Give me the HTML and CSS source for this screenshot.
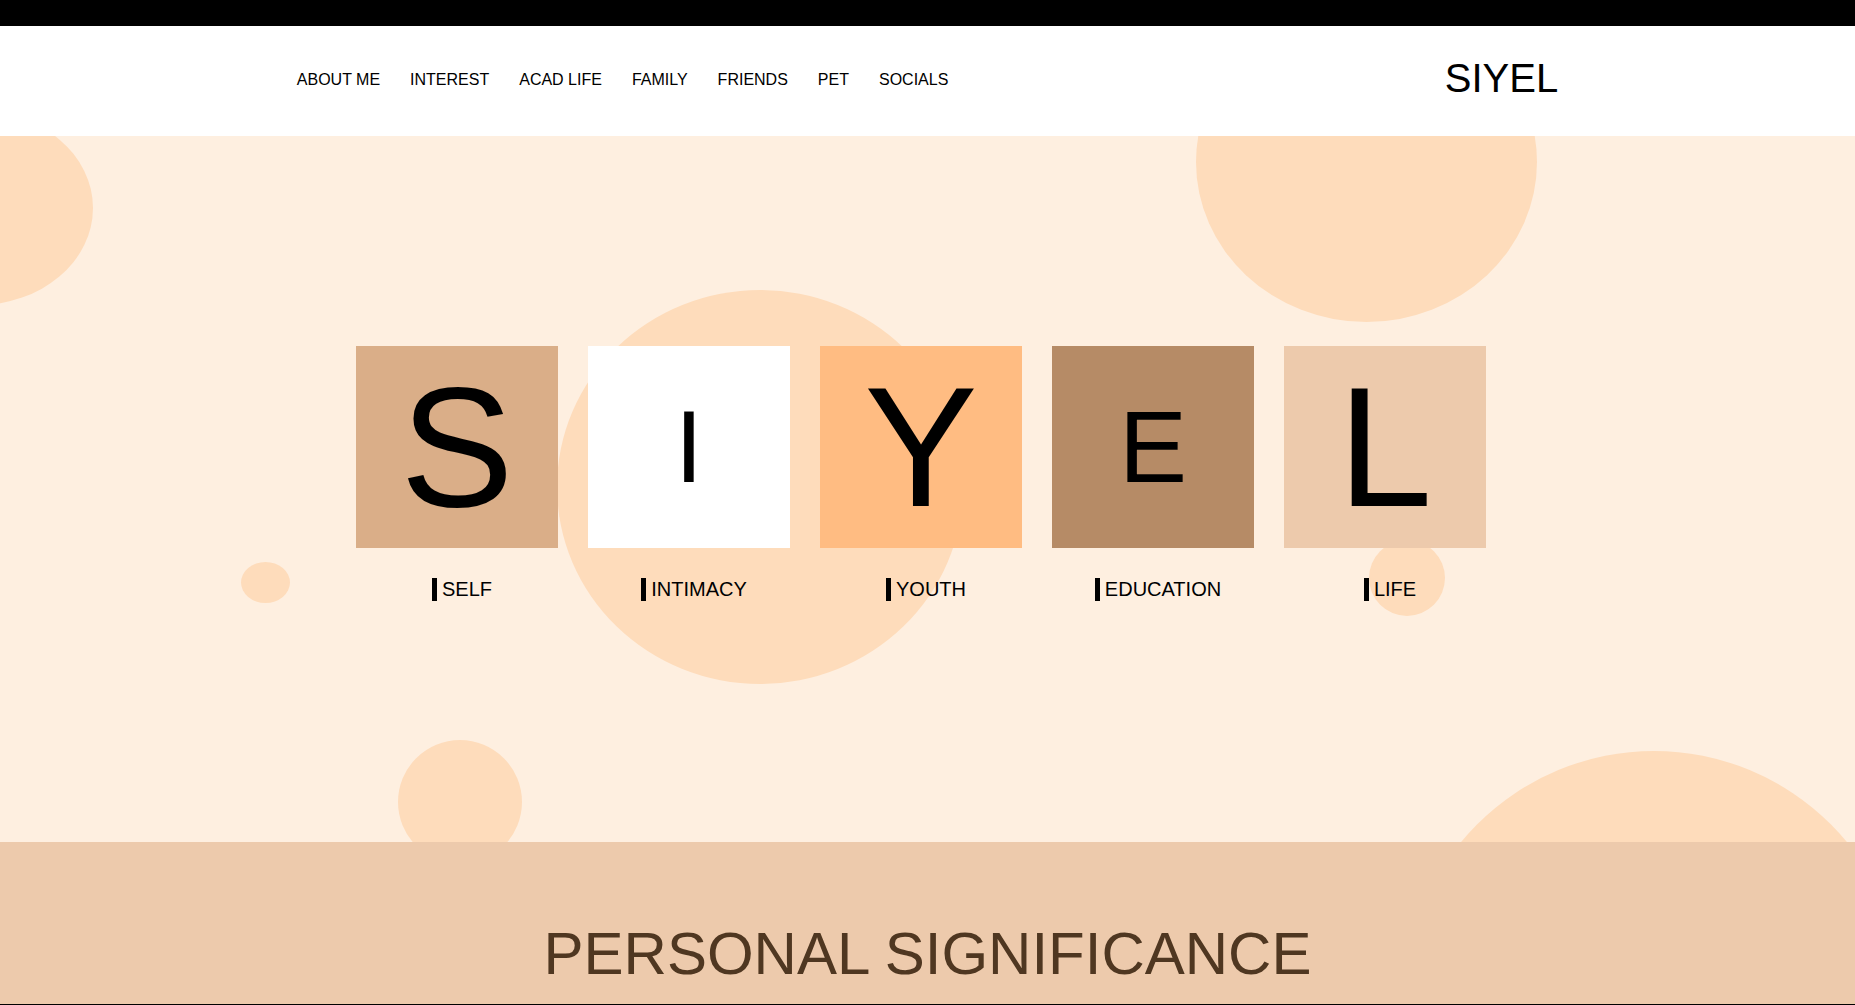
FILE: index.html
```html
<!DOCTYPE html>
<html lang="en">
<head>
<meta charset="utf-8">
<title>SIYEL</title>
<link rel="stylesheet" href="styles.css">
</head>
<body>
<div class="topbar"></div>
<header class="site-header">
  <div class="header-inner">
    <nav class="nav">
      <a href="#">ABOUT ME</a>
      <a href="#">INTEREST</a>
      <a href="#">ACAD LIFE</a>
      <a href="#">FAMILY</a>
      <a href="#">FRIENDS</a>
      <a href="#">PET</a>
      <a href="#">SOCIALS</a>
    </nav>
    <div class="logo">SIYEL</div>
  </div>
</header>
<section class="hero">
  <span class="bubble b1"></span>
  <span class="bubble b2"></span>
  <span class="bubble b3"></span>
  <span class="bubble b4"></span>
  <span class="bubble b5"></span>
  <span class="bubble b6"></span>
  <span class="bubble b7"></span>
  <div class="tiles">
    <div class="tile">
      <div class="square sq-s big">S</div>
      <div class="caption">SELF</div>
    </div>
    <div class="tile">
      <div class="square sq-i small">I</div>
      <div class="caption">INTIMACY</div>
    </div>
    <div class="tile">
      <div class="square sq-y big">Y</div>
      <div class="caption">YOUTH</div>
    </div>
    <div class="tile">
      <div class="square sq-e small">E</div>
      <div class="caption">EDUCATION</div>
    </div>
    <div class="tile">
      <div class="square sq-l big">L</div>
      <div class="caption">LIFE</div>
    </div>
  </div>
</section>
<section class="significance">
  <h2 class="significance-title">PERSONAL SIGNIFICANCE</h2>
</section>
</body>
</html>
```
FILE: styles.css
```css
html, body {
  margin: 0;
  padding: 0;
}
body {
  font-family: "Liberation Sans", Arial, sans-serif;
  color: #000;
  background: #000;
}
.topbar {
  height: 26px;
  background: #000;
}
.site-header {
  background: #fff;
  position: relative;
  z-index: 2;
}
.header-inner {
  width: 68%;
  margin: 0 auto;
  height: 110px;
  padding-bottom: 4px;
  box-sizing: border-box;
  display: flex;
  align-items: center;
  justify-content: space-between;
}
.nav {
  display: flex;
  gap: 30px;
  padding-top: 2px;
}
.nav a {
  color: #000;
  text-decoration: none;
  font-size: 16px;
}
.logo {
  font-size: 40px;
  color: #000;
  margin-bottom: 2px;
}
.hero {
  position: relative;
  overflow: hidden;
  height: 706px;
  background: #feefe0;
}
.bubble {
  position: absolute;
  display: block;
  border-radius: 50%;
  background: #fedcbb;
}
.b1 { left: -137px; top: -25px; width: 230px; height: 194px; }
.b2 { left: 1196px; top: -134px; width: 341px; height: 320px; }
.b3 { left: 557px; top: 154px; width: 406px; height: 394px; }
.b4 { left: 241px; top: 426px; width: 49px; height: 41px; }
.b5 { left: 1369px; top: 404px; width: 76px; height: 76px; }
.b6 { left: 398px; top: 604px; width: 124px; height: 124px; }
.b7 { left: 1404px; top: 615px; width: 500px; height: 500px; }
.tiles {
  position: relative;
  z-index: 1;
  display: flex;
  justify-content: center;
  gap: 30px;
  padding-top: 210px;
  padding-right: 13px;
}
.tile {
  width: 202px;
  display: flex;
  flex-direction: column;
  align-items: center;
}
.square {
  width: 202px;
  height: 202px;
  display: flex;
  align-items: center;
  justify-content: center;
  line-height: 1;
  color: #000;
}
.big { font-size: 170px; }
.small { font-size: 102px; }
.sq-s { background: #daae88; }
.sq-i { background: #ffffff; }
.sq-y { background: #ffbc82; }
.sq-e { background: #b68b66; }
.sq-l { background: #edcaac; }
.caption {
  margin-top: 30px;
  margin-left: 10px;
  border-left: 5px solid #000;
  padding-left: 5px;
  font-size: 20px;
  color: #000;
}
.significance {
  height: 162px;
  box-sizing: border-box;
  padding-top: 77px;
  background: #edcaac;
}
.significance-title {
  margin: 0;
  font-size: 60px;
  font-weight: normal;
  text-align: center;
  color: #4f3721;
}
```
